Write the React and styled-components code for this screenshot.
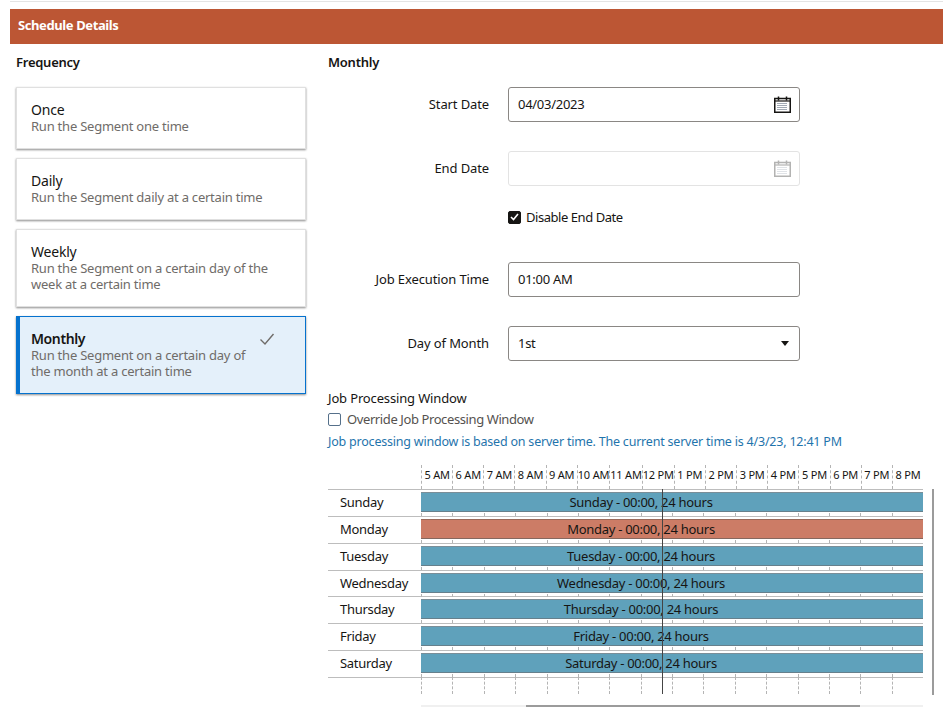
import React from 'react';
import styled, { createGlobalStyle } from 'styled-components';

const GlobalStyle = createGlobalStyle`
  body {
    margin: 0;
    background: #fff;
    color: #161513;
    font-family: 'Noto Sans', sans-serif;
    font-size: 13px;
  }
`;

const Page = styled.div`
  padding: 1px 0 0 10px;
  width: 933px;
  height: 719px;
  overflow: hidden;
`;

const TopRule = styled.div`
  height: 1px;
  background: #e4e4e4;
`;

const Band = styled.h1`
  margin: 7px 0 0;
  height: 35px;
  padding-left: 8px;
  background: #bc5634;
  color: #fff;
  font-size: 13px;
  font-weight: 700;
  line-height: 33px;
  letter-spacing: -0.4px;
`;

const Columns = styled.div`
  display: flex;
  gap: 22px;
  padding: 8px 0 0 6px;
`;

const LeftColumn = styled.div`
  width: 290px;
  flex: none;
`;

const RightColumn = styled.div`
  flex: 1;
`;

const Heading = styled.h2`
  margin: 0 0 15px;
  font-size: 13px;
  font-weight: 600;
  line-height: 20px;
  letter-spacing: -0.25px;
`;

const CardList = styled.div`
  display: flex;
  flex-direction: column;
  gap: 9px;
`;

const Card = styled.div`
  position: relative;
  box-sizing: border-box;
  height: ${({ $tall }) => ($tall ? '78px' : '62px')};
  padding: ${({ $selected }) => ($selected ? '14px 50px 0 11px' : '14px 30px 0 14px')};
  background: ${({ $selected }) => ($selected ? '#e4f0fa' : '#fff')};
  border: 1px solid ${({ $selected }) => ($selected ? '#0572ce' : '#e0e0e0')};
  border-left: ${({ $selected }) => ($selected ? '4px solid #0572ce' : '1px solid #e0e0e0')};
  box-shadow: 0 1px 2px rgba(0, 0, 0, 0.45);
`;

const CardTitle = styled.div`
  font-size: 14px;
  font-weight: ${({ $selected }) => ($selected ? 600 : 400)};
  line-height: 16px;
  letter-spacing: ${({ $selected }) => ($selected ? '-0.4px' : '-0.2px')};
`;

const CardText = styled.div`
  color: #6f6c69;
  font-size: 13px;
  line-height: 16px;
  letter-spacing: -0.23px;
`;

const CheckMark = styled.svg`
  position: absolute;
  top: 15px;
  right: 30px;
  width: 16px;
  height: 14px;
`;

const FormRow = styled.div`
  display: grid;
  grid-template-columns: 161px 292px;
  column-gap: 19px;
  align-items: center;
  margin-bottom: ${({ $gap }) => $gap}px;
`;

const Label = styled.div`
  padding-bottom: 2px;
  text-align: right;
  font-size: 13px;
  letter-spacing: -0.12px;
`;

const Field = styled.div`
  box-sizing: border-box;
  display: flex;
  align-items: center;
  justify-content: space-between;
  height: 35px;
  padding: 0 8px 2px 9px;
  border: 1px solid ${({ $disabled }) => ($disabled ? '#e3e3e3' : '#8a8784')};
  border-radius: 3px;
  font-size: 13px;
  letter-spacing: -0.28px;
`;

const CheckLine = styled.div`
  grid-column: ${({ $inForm }) => ($inForm ? 2 : 'auto')};
  display: flex;
  align-items: center;
  gap: ${({ $inForm }) => ($inForm ? 5 : 6)}px;
  height: ${({ $inForm }) => ($inForm ? '14px' : '20px')};
  margin-top: ${({ $inForm }) => ($inForm ? 0 : 1)}px;
  font-size: 13px;
  letter-spacing: ${({ $inForm }) => ($inForm ? '-0.45px' : '-0.4px')};
  color: ${({ $muted }) => ($muted ? '#55524f' : '#161513')};
`;

const Box = styled.span`
  box-sizing: border-box;
  flex: none;
  display: flex;
  align-items: center;
  justify-content: center;
  width: 13px;
  height: 13px;
  border-radius: 2px;
  background: ${({ $checked }) => ($checked ? '#161513' : '#fff')};
  border: 1px solid ${({ $checked }) => ($checked ? '#161513' : '#55708a')};
`;

const Caret = styled.span`
  width: 0;
  height: 0;
  margin: 2px 2px 0 0;
  border-left: 4px solid transparent;
  border-right: 4px solid transparent;
  border-top: 5px solid #161513;
`;

const SubHeading = styled.div`
  margin-top: 27px;
  font-size: 13px;
  line-height: 20px;
  letter-spacing: -0.15px;
`;

const Info = styled.div`
  margin: 3px 0 13px;
  color: #1f74ac;
  font-size: 12.5px;
  line-height: 20px;
  letter-spacing: -0.21px;
  white-space: nowrap;
`;

const ChartWrap = styled.div`
  display: flex;
  align-items: flex-start;
`;

const Chart = styled.div`
  position: relative;
  width: 595px;
`;

const AxisRow = styled.div`
  display: flex;
  padding-left: 93px;
  height: 24px;
`;

const Hours = styled.div`
  flex: 1;
  display: flex;
`;

const Hour = styled.div`
  box-sizing: border-box;
  flex: 1;
  border-left: 1px dashed #b4b4b4;
  font-size: 11px;
  line-height: 20px;
  letter-spacing: -0.2px;
  text-align: center;
  white-space: nowrap;
`;

const Row = styled.div`
  display: flex;
  height: 26.85px;
  box-sizing: border-box;
  box-shadow: inset 0 1px 0 #bdbdbd;
`;

const DayName = styled.div`
  box-sizing: border-box;
  width: 93px;
  flex: none;
  padding-left: 12px;
  font-size: 13px;
  line-height: 27px;
  letter-spacing: -0.3px;
`;

const Lane = styled.div`
  flex: 1;
  min-width: 0;
  padding-top: 3px;
`;

const Bar = styled.div`
  box-sizing: border-box;
  height: 20px;
  padding-right: 62px;
  background: ${({ $off }) => ($off ? '#cc7c66' : '#5fa1bb')};
  border-top: 1px solid ${({ $off }) => ($off ? '#9a6a5b' : '#7a8e98')};
  border-bottom: 1px solid ${({ $off }) => ($off ? '#85685f' : '#66808c')};
  font-size: 13px;
  line-height: 18px;
  letter-spacing: -0.28px;
  text-align: center;
  white-space: nowrap;
`;

const Ticks = styled.div`
  display: flex;
  height: 3px;
  margin-top: 1px;
`;

const Tick = styled.span`
  flex: 1;
  border-left: 1px solid #b4b4b4;
`;

const Foot = styled.div`
  display: flex;
  height: 17px;
  margin-left: 93px;
  box-shadow: inset 0 1px 0 #bdbdbd;
`;

const FootCell = styled.span`
  flex: 1;
  border-left: 1px dashed #b4b4b4;
`;

const FootRule = styled.div`
  width: 93px;
  height: 1px;
  margin-bottom: -1px;
  background: #bdbdbd;
`;

const NowLine = styled.div`
  position: absolute;
  top: 24px;
  bottom: 0;
  left: 334px;
  width: 1px;
  background: #444;
`;

const VScroll = styled.div`
  width: 2px;
  height: 206px;
  margin: 24px 0 0 9px;
  background: #9b9b9b;
`;

const HScroll = styled.div`
  width: 502px;
  height: 2px;
  margin: 10px 0 0 93px;
  background: #f0f0f0;
`;

const HThumb = styled.div`
  width: 334px;
  height: 100%;
  margin-left: 105px;
  background: #9b9b9b;
`;

const CalendarIcon = ({ faded }) => (
  <svg width="17" height="17" viewBox="0 0 17 17" fill="none" style={{ opacity: faded ? 0.32 : 1, marginTop: 2 }}>
    <rect x="0.75" y="2.5" width="15.5" height="13.75" fill="#fff" stroke="#161513" strokeWidth="1.5" />
    <path d="M1 5h15" stroke="#161513" strokeWidth="1.2" />
    <path d="M4.5 0.5v4M12.5 0.5v4" stroke="#161513" strokeWidth="1.5" />
    <path
      d="M3.5 7.5h10M3.5 9.5h10M3.5 11.5h10M3.5 13.5h10"
      stroke="#45556b"
      strokeWidth="1"
      strokeDasharray="1 1"
    />
  </svg>
);

const cards = [
  { title: 'Once', text: 'Run the Segment one time' },
  { title: 'Daily', text: 'Run the Segment daily at a certain time' },
  { title: 'Weekly', text: 'Run the Segment on a certain day of the week at a certain time', tall: true },
  { title: 'Monthly', text: 'Run the Segment on a certain day of the month at a certain time', tall: true, selected: true }
];

const hours = ['5 AM', '6 AM', '7 AM', '8 AM', '9 AM', '10 AM', '11 AM', '12 PM', '1 PM', '2 PM', '3 PM', '4 PM', '5 PM', '6 PM', '7 PM', '8 PM'];
const days = ['Sunday', 'Monday', 'Tuesday', 'Wednesday', 'Thursday', 'Friday', 'Saturday'];

const App = () => (
  <Page>
    <GlobalStyle />
    <TopRule />
    <Band>Schedule Details</Band>
    <Columns>
      <LeftColumn>
        <Heading>Frequency</Heading>
        <CardList>
          {cards.map(card => (
            <Card key={card.title} $tall={card.tall} $selected={card.selected}>
              <CardTitle $selected={card.selected}>{card.title}</CardTitle>
              <CardText>{card.text}</CardText>
              {card.selected && (
                <CheckMark viewBox="0 0 16 14" fill="none">
                  <path d="M1.5 7.5l4.5 4.5 8.5-10" stroke="#6f6c69" strokeWidth="1.4" />
                </CheckMark>
              )}
            </Card>
          ))}
        </CardList>
      </LeftColumn>
      <RightColumn>
        <Heading>Monthly</Heading>
        <FormRow $gap={29}>
          <Label>Start Date</Label>
          <Field>
            04/03/2023
            <CalendarIcon />
          </Field>
        </FormRow>
        <FormRow $gap={24}>
          <Label>End Date</Label>
          <Field $disabled>
            <span />
            <CalendarIcon faded />
          </Field>
        </FormRow>
        <FormRow $gap={38}>
          <CheckLine $inForm>
            <Box $checked>
              <svg width="9" height="8" viewBox="0 0 9 8" fill="none">
                <path d="M1 4l2.5 2.5L8 1" stroke="#fff" strokeWidth="1.6" />
              </svg>
            </Box>
            Disable End Date
          </CheckLine>
        </FormRow>
        <FormRow $gap={29}>
          <Label>Job Execution Time</Label>
          <Field>01:00 AM</Field>
        </FormRow>
        <FormRow $gap={0}>
          <Label>Day of Month</Label>
          <Field>
            1st
            <Caret />
          </Field>
        </FormRow>
        <SubHeading>Job Processing Window</SubHeading>
        <CheckLine $muted>
          <Box />
          Override Job Processing Window
        </CheckLine>
        <Info>Job processing window is based on server time. The current server time is 4/3/23, 12:41 PM</Info>
        <ChartWrap>
          <Chart>
            <AxisRow>
              <Hours>
                {hours.map(hour => (
                  <Hour key={hour}>{hour}</Hour>
                ))}
              </Hours>
            </AxisRow>
            {days.map(day => (
              <Row key={day}>
                <DayName>{day}</DayName>
                <Lane>
                  <Bar $off={day === 'Monday'}>{day} - 00:00, 24 hours</Bar>
                  <Ticks>
                    {hours.map(hour => (
                      <Tick key={hour} />
                    ))}
                  </Ticks>
                </Lane>
              </Row>
            ))}
            <FootRule />
            <Foot>
              {hours.map(hour => (
                <FootCell key={hour} />
              ))}
            </Foot>
            <NowLine />
          </Chart>
          <VScroll />
        </ChartWrap>
        <HScroll>
          <HThumb />
        </HScroll>
      </RightColumn>
    </Columns>
  </Page>
);

export default App;
